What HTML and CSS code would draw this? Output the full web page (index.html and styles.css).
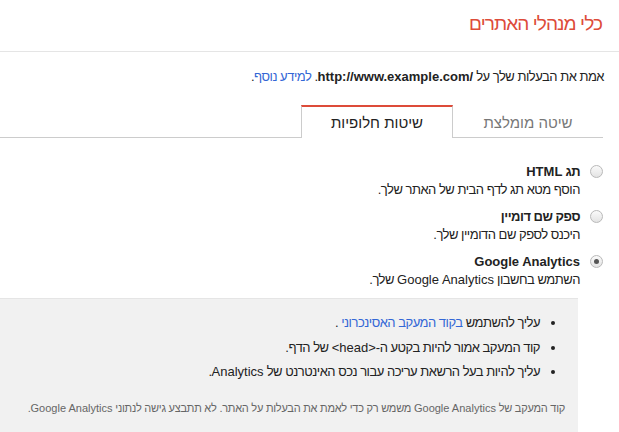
FILE: index.html
```html
<!DOCTYPE html>
<html lang="he" dir="rtl">
<head>
    <meta charset="UTF-8">
    <title>כלי מנהלי האתרים</title>
    <link rel="stylesheet" href="styles.css">
</head>
<body>
    <div class="header">
        <h1>כלי מנהלי האתרים</h1>
    </div>

    <p class="intro">
        אמת את הבעלות שלך על <b class="en">/http://www.example.com</b>. <a href="#">למידע נוסף</a>.
    </p>

    <!-- לשוניות -->
    <div class="tabs">
        <div class="tab">שיטה מומלצת</div>
        <div class="tab active">שיטות חלופיות</div>
        <div class="tab-rest"></div>
    </div>

    <div class="methods">
        <label class="method">
            <span class="radio"></span>
            <span class="method-text">
                <b>תג <span class="en">HTML</span></b>
                <span>הוסף מטא תג לדף הבית של האתר שלך.</span>
            </span>
        </label>
        <label class="method">
            <span class="radio"></span>
            <span class="method-text">
                <b>ספק שם דומיין</b>
                <span>היכנס לספק שם הדומיין שלך.</span>
            </span>
        </label>
        <label class="method">
            <span class="radio checked"></span>
            <span class="method-text">
                <b class="en">Google Analytics</b>
                <span>השתמש בחשבון <span class="en">Google Analytics</span> שלך.</span>
            </span>
        </label>
    </div>

    <div class="details">
        <ul>
            <li>עליך להשתמש <a href="#">בקוד המעקב האסינכרוני</a> .</li>
            <li>קוד המעקב אמור להיות בקטע ה-<span class="en">&lt;head&gt;</span> של הדף.</li>
            <li>עליך להיות בעל הרשאת עריכה עבור נכס האינטרנט של <span class="en">Analytics</span>.</li>
        </ul>
        <p class="note">קוד המעקב של <span class="en">Google Analytics</span> משמש רק כדי לאמת את הבעלות על האתר. לא תתבצע גישה לנתוני <span class="en">Google Analytics</span>.</p>
    </div>
</body>
</html>
```

FILE: styles.css
```css
body {
    margin: 0;
    font-family: Arial, "Liberation Sans", sans-serif;
    font-size: 13px;
    letter-spacing: -0.5px;
    color: #222;
    background: #fff;
    direction: rtl;
    overflow: hidden;
}

.en {
    letter-spacing: 0;
}

a {
    color: #3367d6;
    text-decoration: none;
}

.header {
    height: 51px;
    border-bottom: 1px solid #e5e5e5;
    padding-right: 17px;
}

h1 {
    margin: 0;
    padding-top: 13px;
    font-size: 19px;
    letter-spacing: -0.9px;
    font-weight: normal;
    color: #dd4b39;
}

.intro {
    margin: 16px 15px 0 0;
    line-height: 17px;
}

.tabs {
    display: flex;
    margin: 20px 16px 0 0;
    height: 33px;
    letter-spacing: 0;
}

.tab {
    width: 150px;
    text-align: center;
    font-size: 15px;
    line-height: 31px;
    color: #777;
    border-bottom: 1px solid #ccc;
    padding-top: 2px;
}

.tab.active {
    color: #222;
    border-top: 2px solid #dd4b39;
    border-left: 1px solid #ccc;
    border-right: 1px solid #ccc;
    border-bottom: none;
    padding-top: 0;
    line-height: 32px;
}

.tab-rest {
    flex: 1;
    border-bottom: 1px solid #ccc;
}

.methods {
    margin: 25px 16px 0 0;
}

.method {
    display: flex;
    align-items: flex-start;
    margin-bottom: 10px;
    line-height: 17px;
}

.radio {
    width: 11px;
    height: 11px;
    border: 1px solid #b9b9b9;
    border-radius: 50%;
    background: linear-gradient(#fafafa, #e3e3e3);
    margin: 2px 0 0 10px;
    display: flex;
    align-items: center;
    justify-content: center;
}

.radio.checked::after {
    content: "";
    width: 5px;
    height: 5px;
    border-radius: 50%;
    background: #555;
}

.method-text {
    display: flex;
    flex-direction: column;
}

.method-text b {
    margin-bottom: 1px;
}

.details {
    margin: 10px 41px 0 0;
    background: #f1f1f1;
    border-top: 1px solid #e5e5e5;
    padding: 15px 13px 20px 0;
    min-height: 120px;
}

.details ul {
    margin: 0;
    padding: 0 25px 0 0;
}

.details li {
    line-height: 17px;
    margin-bottom: 7.5px;
}

.note {
    margin: 22px 0 0;
    font-size: 11px;
    letter-spacing: -0.25px;
    color: #666;
}
```
